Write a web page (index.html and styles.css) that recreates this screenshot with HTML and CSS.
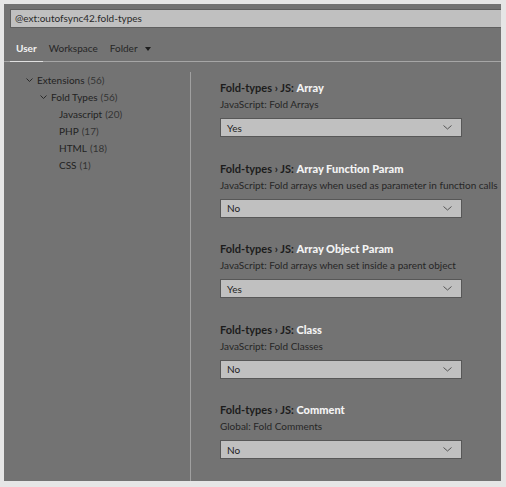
FILE: index.html
```html
<!DOCTYPE html>
<html>
<head>
<meta charset="utf-8">
<link rel="stylesheet" href="styles.css">
</head>
<body>
<div class="panel">
  <div class="search-wrap">
    <div class="search">@ext:outofsync42.fold-types</div>
  </div>
  <div class="tabs">
    <span class="tab active">User</span>
    <span class="tab">Workspace</span>
    <span class="tab">Folder <span class="caret"></span></span>
  </div>
  <div class="body">
    <div class="tree">
      <div class="row lvl1"><svg class="chev" width="7" height="5" viewBox="0 0 7 5"><path d="M0.5 0.5 L3.5 3.5 L6.5 0.5" fill="none" stroke="#2a2a2a" stroke-width="1"/></svg>Extensions <span class="count">(56)</span></div>
      <div class="row lvl2"><svg class="chev" width="7" height="5" viewBox="0 0 7 5"><path d="M0.5 0.5 L3.5 3.5 L6.5 0.5" fill="none" stroke="#2a2a2a" stroke-width="1"/></svg>Fold Types <span class="count">(56)</span></div>
      <div class="row lvl3">Javascript <span class="count">(20)</span></div>
      <div class="row lvl3">PHP <span class="count">(17)</span></div>
      <div class="row lvl3">HTML <span class="count">(18)</span></div>
      <div class="row lvl3">CSS <span class="count">(1)</span></div>
    </div>
    <div class="divider"></div>
    <div class="settings">
      <div class="setting">
        <div class="title">Fold-types › JS: <b>Array</b></div>
        <div class="desc">JavaScript: Fold Arrays</div>
        <div class="select">Yes<svg class="dd" width="9" height="5" viewBox="0 0 9 5"><path d="M0.5 0.5 L4.5 4 L8.5 0.5" fill="none" stroke="#555" stroke-width="1"/></svg></div>
      </div>
      <div class="setting">
        <div class="title">Fold-types › JS: <b>Array Function Param</b></div>
        <div class="desc">JavaScript: Fold arrays when used as parameter in function calls</div>
        <div class="select">No<svg class="dd" width="9" height="5" viewBox="0 0 9 5"><path d="M0.5 0.5 L4.5 4 L8.5 0.5" fill="none" stroke="#555" stroke-width="1"/></svg></div>
      </div>
      <div class="setting">
        <div class="title">Fold-types › JS: <b>Array Object Param</b></div>
        <div class="desc">JavaScript: Fold arrays when set inside a parent object</div>
        <div class="select">Yes<svg class="dd" width="9" height="5" viewBox="0 0 9 5"><path d="M0.5 0.5 L4.5 4 L8.5 0.5" fill="none" stroke="#555" stroke-width="1"/></svg></div>
      </div>
      <div class="setting">
        <div class="title">Fold-types › JS: <b>Class</b></div>
        <div class="desc">JavaScript: Fold Classes</div>
        <div class="select">No<svg class="dd" width="9" height="5" viewBox="0 0 9 5"><path d="M0.5 0.5 L4.5 4 L8.5 0.5" fill="none" stroke="#555" stroke-width="1"/></svg></div>
      </div>
      <div class="setting">
        <div class="title">Fold-types › JS: <b>Comment</b></div>
        <div class="desc">Global: Fold Comments</div>
        <div class="select">No<svg class="dd" width="9" height="5" viewBox="0 0 9 5"><path d="M0.5 0.5 L4.5 4 L8.5 0.5" fill="none" stroke="#555" stroke-width="1"/></svg></div>
      </div>
    </div>
  </div>
</div>
</body>
</html>
```

FILE: styles.css
```css
html, body {
  margin: 0;
  padding: 0;
  background: #e6e6e6;
  width: 506px;
  height: 487px;
  overflow: hidden;
}
body {
  font-family: "Lato", "Noto Sans", sans-serif;
  font-size: 10px;
  color: #1e1e1e;
}
.panel {
  margin: 4px 0 0 4px;
  width: 497px;
  height: 477px;
  background: #737373;
  display: flex;
  flex-direction: column;
  overflow: hidden;
}
.search-wrap {
  padding: 5px 0 0 6px;
}
.search {
  height: 17px;
  background: #c0c0c0;
  border-top: 1px solid #5f5f5f;
  border-bottom: 1px solid #5f5f5f;
  border-left: 1px solid #5f5f5f;
  padding-left: 4px;
  line-height: 17px;
  color: #2a2a2a;
}
.tabs {
  margin-top: 10px;
  height: 23px;
  border-bottom: 1px solid #a6a6a6;
  display: flex;
  align-items: center;
  padding-left: 6px;
}
.tab {
  padding: 0 6px;
  color: #262626;
  height: 23px;
  line-height: 21px;
  box-sizing: border-box;
}
.tab.active {
  color: #f2f2f2;
  font-weight: 700;
  border-bottom: 1px solid #e0e0e0;
  margin-bottom: -1px;
  height: 24px;
}
.caret {
  display: inline-block;
  width: 0;
  height: 0;
  border-left: 3px solid transparent;
  border-right: 3px solid transparent;
  border-top: 4px solid #1e1e1e;
  margin-left: 5px;
  vertical-align: 1px;
}
.body {
  flex: 1;
  display: flex;
}
.tree {
  width: 186px;
  flex-shrink: 0;
  padding-top: 10px;
}
.row {
  height: 17px;
  line-height: 17px;
  display: flex;
  align-items: center;
  color: #222;
  white-space: nowrap;
}
.row .count { color: #333; margin-left: 3px; }
.chev { margin-right: 4px; }
.lvl1 { padding-left: 22px; }
.lvl2 { padding-left: 36px; }
.lvl3 { padding-left: 55px; }
.divider {
  width: 1px;
  flex-shrink: 0;
  background: #a0a0a0;
  margin-top: 10px;
}
.settings {
  flex: 1;
  min-width: 0;
  padding: 18px 0 0 29px;
  white-space: nowrap;
}
.setting {
  height: 80.5px;
}
.title {
  font-size: 11px;
  font-weight: 700;
  color: #1c1c1c;
  line-height: 16px;
}
.title b {
  color: #f4f4f4;
  font-weight: 900;
}
.desc {
  color: #262626;
  line-height: 16px;
}
.select {
  margin-top: 6px;
  height: 17px;
  border: 1px solid #575757;
  background: #c0c0c0;
  display: flex;
  align-items: center;
  justify-content: space-between;
  padding: 0 9px 0 6px;
  width: 225px;
  color: #1e1e1e;
}
```
